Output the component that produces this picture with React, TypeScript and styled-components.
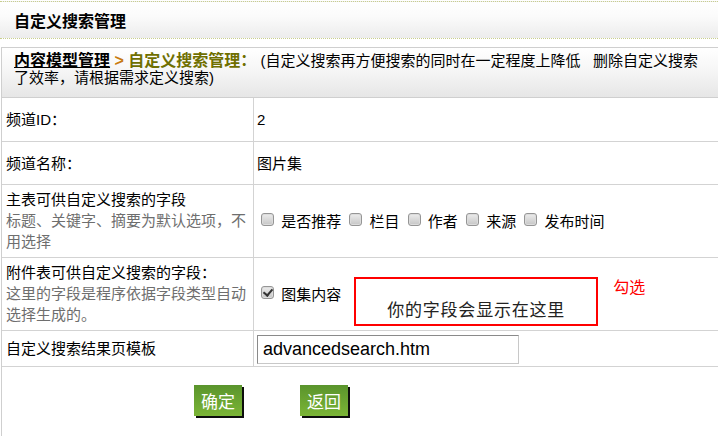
import React from "react";
import styled, { createGlobalStyle } from "styled-components";

const GlobalStyle = createGlobalStyle`
  html, body { margin: 0; padding: 0; background: #fff; }
  body {
    font-family: "Liberation Sans", "Noto Sans CJK SC", sans-serif;
    font-size: 15px;
    color: #000;
  }
  * { box-sizing: border-box; }
`;

const Page = styled.div`
  width: 718px;
  height: 436px;
  overflow: hidden;
`;

const TitleBar = styled.div`
  margin-top: 1px;
  height: 38px;
  border-top: 1px dotted #c9cf8e;
  border-bottom: 1px dotted #c9cf8e;
  background: linear-gradient(#ffffff 0%, #fbfbfb 40%, #ececec 100%);
  display: flex;
  align-items: center;
  padding-left: 14px;
  font-size: 16px;
  font-weight: bold;
`;

const Panel = styled.div`
  margin: 8px 0 0 1px;
  border-left: 1px solid #cfcfcf;
  border-top: 1px solid #cfcfcf;
  height: 400px;
`;

const Crumb = styled.div`
  height: 50px;
  padding: 4px 0 0 12px;
  background: linear-gradient(#ffffff 0%, #f6f6f6 45%, #e6e6e6 100%);
  border-bottom: 1px solid #cfcfcf;
  line-height: 17px;
`;

const CrumbLine = styled.div`
  white-space: nowrap;
  font-size: 15px;
`;

const CrumbLink = styled.a`
  font-size: 16px;
  font-weight: bold;
  color: #000;
  text-decoration: underline;
`;

const CrumbSep = styled.span`
  font-size: 16px;
  font-weight: bold;
  color: #c87a10;
`;

const CrumbCurrent = styled.span`
  font-size: 16px;
  font-weight: bold;
  color: #6f6f00;
`;

const FormGrid = styled.div`
  display: grid;
  grid-template-columns: 252px 1fr;
  grid-template-rows: 44px 43px 73px 73px 36px;
`;

const LabelCell = styled.div<{ $stack?: boolean }>`
  border-right: 1px solid #d3d3d3;
  border-bottom: 1px solid #d3d3d3;
  padding: ${(p) => (p.$stack ? "4px 4px 0 4px" : "0 4px")};
  display: flex;
  flex-direction: column;
  justify-content: ${(p) => (p.$stack ? "flex-start" : "center")};
  line-height: 21px;
  font-size: 15px;
`;

const ValueCell = styled.div`
  border-bottom: 1px solid #d3d3d3;
  padding: 0 3px;
  display: flex;
  align-items: center;
  font-size: 15px;
  line-height: 21px;
`;

const Note = styled.span`
  color: #6e6e6e;
`;

const Check = styled.input.attrs({ type: "checkbox" })`
  appearance: none;
  -webkit-appearance: none;
  width: 13px;
  height: 13px;
  margin: 3px 3px 3px 4px;
  border: 1px solid #959595;
  border-radius: 3px;
  background: linear-gradient(#ececec, #c6c6c6);
  box-shadow: inset 0 0 0 1px #dcdcdc;
  position: relative;
  vertical-align: -2px;
  flex: none;
  &:checked::after {
    content: "";
    position: absolute;
    left: 3px;
    top: 0px;
    width: 4px;
    height: 7px;
    border: solid #333;
    border-width: 0 2px 2px 0;
    transform: rotate(40deg);
  }
`;

const Options = styled.span`
  white-space: nowrap;
`;

const FieldBox = styled.div`
  width: 244px;
  height: 49px;
  margin: 14px 0 0 13px;
  border: 2px solid #ff0000;
  display: flex;
  align-items: flex-end;
  justify-content: center;
  padding-bottom: 3px;
  font-size: 17px;
  letter-spacing: 0.8px;
  color: #222;
  line-height: 20px;
`;

const Hint = styled.span`
  margin: -14px 0 0 15px;
  color: #ff0000;
  font-size: 16px;
`;

const TextInput = styled.input`
  width: 262px;
  height: 29px;
  margin-top: 1px;
  border: 1px solid #c8c8c8;
  border-top-color: #8a8a8a;
  border-left-color: #8a8a8a;
  padding: 0 5px;
  font-family: "Liberation Sans", sans-serif;
  font-size: 18px;
  color: #000;
  background: #fff;
  outline: none;
`;

const ButtonBar = styled.div`
  display: flex;
  gap: 58px;
  padding: 18px 0 0 192px;
`;

const GreenButton = styled.button`
  width: 48px;
  height: 31px;
  border: none;
  padding: 0;
  background: linear-gradient(#5a942c, #7bb536);
  box-shadow: 2px 2px 0 #0d0d0d;
  color: #fff;
  font-family: "Noto Sans CJK SC", sans-serif;
  font-size: 17px;
  cursor: pointer;
`;

export default function App() {
  return (
    <Page>
      <GlobalStyle />
      <TitleBar>自定义搜索管理</TitleBar>
      <Panel>
        <Crumb>
          <CrumbLine>
            <CrumbLink href="#">内容模型管理</CrumbLink>
            <CrumbSep> &gt; </CrumbSep>
            <CrumbCurrent>自定义搜索管理：</CrumbCurrent> (自定义搜索再方便搜索的同时在一定程度上降低{"\u00a0\u00a0\u00a0"}删除自定义搜索
          </CrumbLine>
          <CrumbLine>了效率，请根据需求定义搜索)</CrumbLine>
        </Crumb>
        <FormGrid>
          <LabelCell>频道ID：</LabelCell>
          <ValueCell>2</ValueCell>

          <LabelCell>频道名称：</LabelCell>
          <ValueCell>图片集</ValueCell>

          <LabelCell $stack>
            <span>主表可供自定义搜索的字段</span>
            <Note>标题、关键字、摘要为默认选项，不用选择</Note>
          </LabelCell>
          <ValueCell>
            <Options>
              <Check /> 是否推荐 <Check /> 栏目 <Check /> 作者 <Check /> 来源 <Check /> 发布时间
            </Options>
          </ValueCell>

          <LabelCell $stack>
            <span>附件表可供自定义搜索的字段：</span>
            <Note>这里的字段是程序依据字段类型自动选择生成的。</Note>
          </LabelCell>
          <ValueCell>
            <Options>
              <Check defaultChecked /> 图集内容
            </Options>
            <FieldBox>你的字段会显示在这里</FieldBox>
            <Hint>勾选</Hint>
          </ValueCell>

          <LabelCell>自定义搜索结果页模板</LabelCell>
          <ValueCell>
            <TextInput defaultValue="advancedsearch.htm" />
          </ValueCell>
        </FormGrid>
        <ButtonBar>
          <GreenButton>确定</GreenButton>
          <GreenButton>返回</GreenButton>
        </ButtonBar>
      </Panel>
    </Page>
  );
}
